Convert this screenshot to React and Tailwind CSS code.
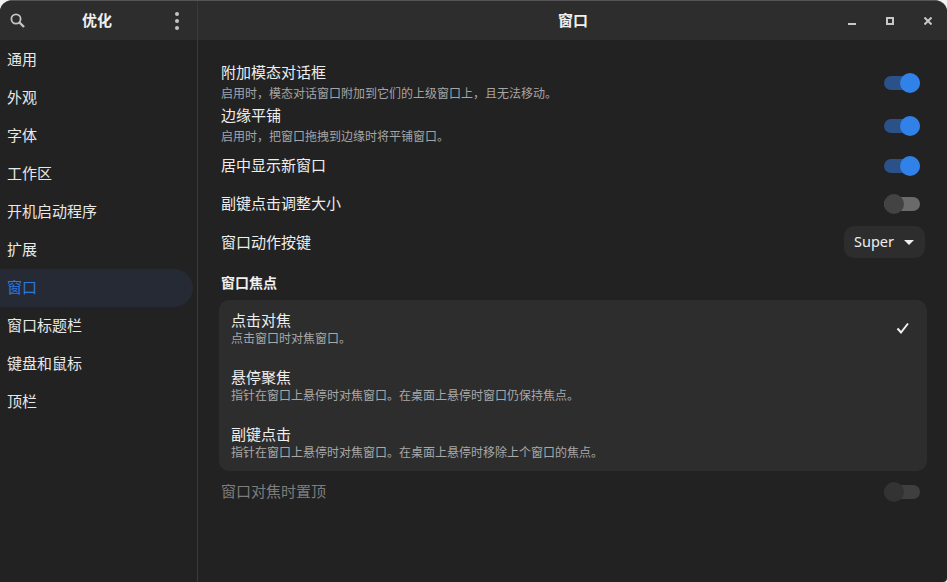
import React from 'react';

const navItems = ['通用', '外观', '字体', '工作区', '开机启动程序', '扩展', '窗口', '窗口标题栏', '键盘和鼠标', '顶栏'];

const Toggle = ({ on, dim }) => {
  if (on) {
    return (
      <div className="relative w-[36px] h-[14px] rounded-full bg-[#2a5288] mr-[7px] mt-[2px]">
        <div className="absolute right-[0px] top-[-3px] w-[20px] h-[20px] rounded-full bg-[#3081e8]" />
      </div>
    );
  }
  return (
    <div className={`relative w-[36px] h-[14px] rounded-full mr-[7px] mt-[2px] ${dim ? 'bg-[#3f3f3f]' : 'bg-[#6a6a6a]'}`}>
      <div className={`absolute left-[0px] top-[-3px] w-[20px] h-[20px] rounded-full ${dim ? 'bg-[#333333]' : 'bg-[#434343]'}`} />
    </div>
  );
};

const SettingRow = ({ title, sub, className, children, dim }) => (
  <div className={`flex items-center justify-between pl-[2px] ${className}`}>
    <div className="flex flex-col">
      <span className={`text-[15px] leading-[20px] ${dim ? 'text-[#7d7d7d]' : 'text-[#eeeeee]'}`}>{title}</span>
      {sub && <span className="text-[12px] leading-[17px] mt-[2px] text-[#a5a5a5]">{sub}</span>}
    </div>
    {children}
  </div>
);

const FocusRow = ({ title, sub, checked, className }) => (
  <div className={`flex items-center justify-between pl-[12px] pr-[16px] ${className}`}>
    <div className="flex flex-col">
      <span className="text-[15px] leading-[18px] text-[#eeeeee]">{title}</span>
      <span className="text-[12px] leading-[15px] mt-[1px] text-[#a8a8a8]">{sub}</span>
    </div>
    {checked && (
      <svg width="16" height="16" viewBox="0 0 16 16" fill="none" stroke="#f0f0f0" strokeWidth="2">
        <path d="M2.5 8.5 L6 12.5 L13 3.5" />
      </svg>
    )}
  </div>
);

export default function App() {
  return (
    <div
      className="w-[947px] h-[582px] bg-[#f2f2f2] overflow-hidden"
      style={{ fontFamily: '"Noto Sans CJK SC", "Noto Sans", sans-serif' }}
    >
      <div className="w-full h-full flex rounded-t-[12px] rounded-br-[4px] overflow-hidden bg-[#222222] border-t border-[#555555]">
        {/* sidebar */}
        <div className="w-[198px] shrink-0 flex flex-col border-r border-[#3a3a3a]">
          <div className="h-[39px] shrink-0 bg-[#2d2d2d] flex items-center justify-between pl-[10px] pr-[18px]">
            <svg width="15" height="15" viewBox="0 0 15 15" fill="none" stroke="#c4c4c4" strokeWidth="1.8">
              <circle cx="6" cy="6" r="4.6" />
              <path d="M9.5 9.5 L14 14" strokeWidth="2.4" />
            </svg>
            <span className="text-[15px] font-bold text-[#f0f0f0] mr-[6px]">优化</span>
            <div className="flex flex-col gap-[3px]">
              <div className="w-[4px] h-[4px] rounded-full bg-[#c4c4c4]" />
              <div className="w-[4px] h-[4px] rounded-full bg-[#c4c4c4]" />
              <div className="w-[4px] h-[4px] rounded-full bg-[#c4c4c4]" />
            </div>
          </div>
          <div className="flex flex-col pt-[1px] pr-[4px]">
            {navItems.map((item) => (
              <div
                key={item}
                className={`h-[38px] flex items-center pl-[7px] pb-[2px] text-[15px] ${
                  item === '窗口' ? 'bg-[#252a35] text-[#2f78e0] rounded-r-[19px]' : 'text-[#e8e8e8]'
                }`}
              >
                {item}
              </div>
            ))}
          </div>
        </div>

        {/* main */}
        <div className="flex-1 flex flex-col">
          <div className="h-[39px] shrink-0 bg-[#2d2d2d] flex items-center justify-between pl-[360px] pr-[15px]">
            <span className="text-[15px] font-bold text-[#f0f0f0]">窗口</span>
            <div className="flex items-center gap-[30px]">
              <div className="w-[8px] h-[2px] bg-[#c8c8c8] mt-[6px]" />
              <div className="w-[8px] h-[8px] border-2 border-[#c8c8c8]" />
              <svg width="8" height="8" viewBox="0 0 8 8" stroke="#c8c8c8" strokeWidth="2">
                <path d="M0.5 0.5 L7.5 7.5 M7.5 0.5 L0.5 7.5" />
              </svg>
            </div>
          </div>

          <div className="flex flex-col pl-[21px] pr-[20px] pt-[20px]">
            <SettingRow title="附加模态对话框" sub="启用时，模态对话窗口附加到它们的上级窗口上，且无法移动。" className="h-[43px]">
              <Toggle on />
            </SettingRow>
            <SettingRow title="边缘平铺" sub="启用时，把窗口拖拽到边缘时将平铺窗口。" className="h-[43px]">
              <Toggle on />
            </SettingRow>
            <SettingRow title="居中显示新窗口" className="h-[38px]">
              <Toggle on />
            </SettingRow>
            <SettingRow title="副键点击调整大小" className="h-[38px]">
              <Toggle />
            </SettingRow>
            <SettingRow title="窗口动作按键" className="h-[40px]">
              <div className="w-[81px] h-[32px] mr-[2px] rounded-[10px] bg-[#2d2d2d] flex items-center pl-[10px] gap-[10px]">
                <span className="text-[14.5px] text-[#eeeeee]" style={{ fontFamily: '"Noto Sans", sans-serif' }}>Super</span>
                <div className="w-0 h-0 border-l-[5px] border-r-[5px] border-t-[5px] border-l-transparent border-r-transparent border-t-[#f0f0f0]" />
              </div>
            </SettingRow>
            <div className="pl-[2px] mt-[10px] h-[29px] text-[14px] leading-[20px] font-bold text-[#f0f0f0]">窗口焦点</div>
            <div className="rounded-[10px] bg-[#2d2d2d] h-[171px] flex flex-col pt-[10px] mt-[-1px]">
              <FocusRow title="点击对焦" sub="点击窗口时对焦窗口。" checked className="h-[36px]" />
              <FocusRow title="悬停聚焦" sub="指针在窗口上悬停时对焦窗口。在桌面上悬停时窗口仍保持焦点。" className="h-[36px] mt-[21px]" />
              <FocusRow title="副键点击" sub="指针在窗口上悬停时对焦窗口。在桌面上悬停时移除上个窗口的焦点。" className="h-[36px] mt-[21px]" />
            </div>
            <SettingRow title="窗口对焦时置顶" dim className="h-[40px]">
              <Toggle dim />
            </SettingRow>
          </div>
        </div>
      </div>
    </div>
  );
}
